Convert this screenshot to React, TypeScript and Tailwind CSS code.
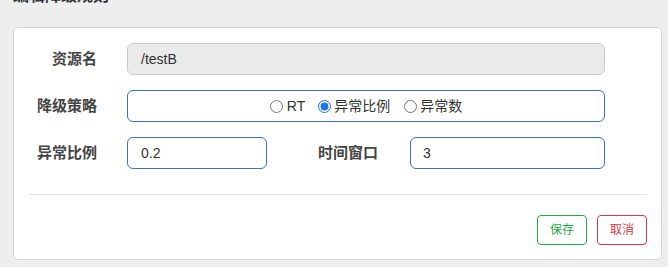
import React from "react";

const font = { fontFamily: '"Liberation Sans", "Noto Sans CJK SC", sans-serif' };

export default function App() {
  return (
    <div
      className="w-[668px] h-[267px] overflow-hidden bg-[#eeeeee] font-['Liberation_Sans','Noto_Sans_CJK_SC',sans-serif]"
      style={font}
    >
      <div className="pl-[13px] mt-[-12px] h-[16px] text-[16px] leading-[16px] font-bold text-[#333]">
        编辑降级规则
      </div>
      <div className="ml-[13px] mt-[23px] w-[649px] h-[233px] bg-white border border-[#d6d6d6] rounded-[5px] pt-[15px] px-[15px]">
        <div className="flex flex-col gap-[15px]">
          <div className="flex items-center h-[32px]">
            <div className="w-[68px] text-right text-[15px] font-bold text-[#444]">资源名</div>
            <div className="ml-[30px] w-[478px] h-[32px] rounded-[6px] border border-[#cccccc] bg-[#eaeaea] px-[13px] flex items-center text-[14px] text-[#333]">
              /testB
            </div>
          </div>
          <div className="flex items-center h-[32px]">
            <div className="w-[68px] text-right text-[15px] font-bold text-[#444]">降级策略</div>
            <div className="ml-[30px] w-[478px] h-[32px] rounded-[6px] border border-[#3a74b5] bg-white flex items-center justify-center text-[14px] text-[#333]">
              <label className="flex items-center">
                <input type="radio" name="grade" className="m-0 w-[13px] h-[13px] accent-[#1a73e8]" />
                <span className="ml-[4px]">RT</span>
              </label>
              <label className="flex items-center ml-[13px]">
                <input type="radio" name="grade" defaultChecked className="m-0 w-[13px] h-[13px] accent-[#1a73e8]" />
                <span className="ml-[3px]">异常比例</span>
              </label>
              <label className="flex items-center ml-[14px]">
                <input type="radio" name="grade" className="m-0 w-[13px] h-[13px] accent-[#1a73e8]" />
                <span className="ml-[3px]">异常数</span>
              </label>
            </div>
          </div>
          <div className="flex items-center h-[32px]">
            <div className="w-[68px] text-right text-[15px] font-bold text-[#444]">异常比例</div>
            <div className="ml-[30px] w-[140px] h-[32px] rounded-[6px] border border-[#3a74b5] bg-white px-[13px] flex items-center text-[14px] text-[#333]">
              0.2
            </div>
            <div className="w-[111px] text-right text-[15px] font-bold text-[#444]">时间窗口</div>
            <div className="ml-[32px] w-[195px] h-[32px] rounded-[6px] border border-[#3a74b5] bg-white px-[12px] flex items-center text-[14px] text-[#333]">
              3
            </div>
          </div>
        </div>
        <div className="mt-[25px] w-[618px] border-t border-[#e2e2e2]"></div>
        <div className="mt-[20px] w-[618px] flex justify-end gap-[10px]">
          <button className="w-[50px] h-[30px] rounded-[4px] border border-[#28a745] bg-white text-[12px] text-[#28a745] flex items-center justify-center">
            保存
          </button>
          <button className="w-[50px] h-[30px] rounded-[4px] border border-[#dc3545] bg-white text-[12px] text-[#dc3545] flex items-center justify-center">
            取消
          </button>
        </div>
      </div>
    </div>
  );
}
